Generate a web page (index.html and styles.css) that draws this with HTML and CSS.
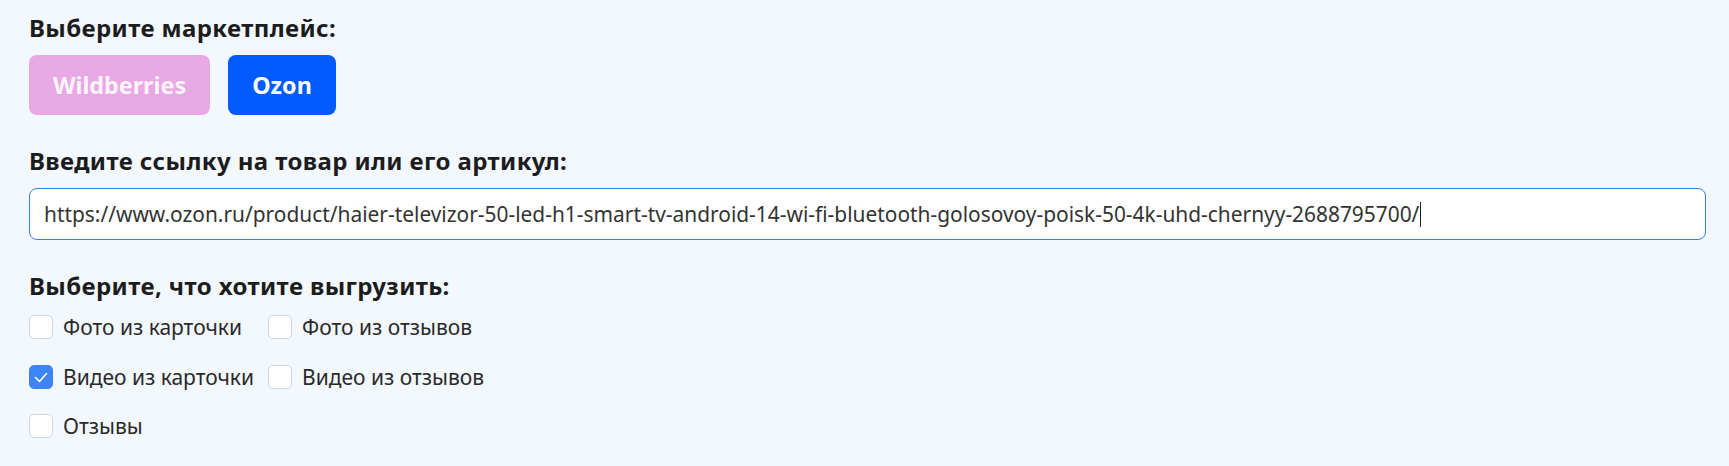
FILE: index.html
```html
<!DOCTYPE html>
<html lang="ru">
<head>
<meta charset="utf-8">
<title>Выгрузка с маркетплейса</title>
<link rel="stylesheet" href="styles.css">
</head>
<body>
<main class="form">
  <section class="field">
    <h2 class="field-title">Выберите маркетплейс:</h2>
    <div class="mp-buttons">
      <button class="mp-btn mp-wb" type="button">Wildberries</button>
      <button class="mp-btn mp-ozon" type="button">Ozon</button>
    </div>
  </section>

  <section class="field">
    <h2 class="field-title">Введите ссылку на товар или его артикул:</h2>
    <div class="url-input" role="textbox">https://www.ozon.ru/product/haier-televizor-50-led-h1-smart-tv-android-14-wi-fi-bluetooth-golosovoy-poisk-50-4k-uhd-chernyy-2688795700/<span class="caret"></span></div>
  </section>

  <section class="field">
    <h2 class="field-title">Выберите, что хотите выгрузить:</h2>
    <div class="options">
      <label class="option"><span class="box"></span><span class="option-text">Фото из карточки</span></label>
      <label class="option"><span class="box"></span><span class="option-text">Фото из отзывов</span></label>
      <label class="option"><span class="box checked"><svg viewBox="0 0 24 24" width="24" height="24"><path d="M6.5 12.5 L10.5 16.5 L17.5 8.5" fill="none" stroke="#fff" stroke-width="1.6" stroke-linecap="round" stroke-linejoin="round"/></svg></span><span class="option-text">Видео из карточки</span></label>
      <label class="option"><span class="box"></span><span class="option-text">Видео из отзывов</span></label>
      <label class="option"><span class="box"></span><span class="option-text">Отзывы</span></label>
    </div>
  </section>
</main>
</body>
</html>
```

FILE: styles.css
```css
html, body {
  margin: 0;
  padding: 0;
}
body {
  background: #f3f7fe;
  font-family: "Noto Sans", "Open Sans", sans-serif;
  color: #1f1f1f;
}
.form {
  padding: 12px 23px 20px 29px;
  display: flex;
  flex-direction: column;
  gap: 30px;
}
.field {
  display: flex;
  flex-direction: column;
  gap: 11px;
}
.field-title {
  margin: 0;
  font-size: 24px;
  font-weight: 700;
  line-height: 32px;
  letter-spacing: 0.4px;
  color: #1c1c1c;
}
.mp-buttons {
  display: flex;
  gap: 18px;
}
.mp-btn {
  height: 60px;
  padding: 0;
  border: none;
  border-radius: 8px;
  font-family: inherit;
  font-size: 23.3px;
  font-weight: 700;
  color: #fff;
}
.mp-wb {
  width: 181px;
  background: #e8a8e3;
  color: #fcf4fb;
}
.mp-ozon {
  width: 108px;
  background: #005bff;
}
.url-input {
  height: 52px;
  box-sizing: border-box;
  border: 1px solid #3d7fe0;
  border-radius: 8px;
  background: #fff;
  padding: 0 14px;
  display: flex;
  align-items: center;
  font-size: 20.9px;
  color: #333;
  white-space: nowrap;
  overflow: hidden;
}
.caret {
  display: inline-block;
  width: 1px;
  height: 25px;
  background: #222;
  margin-left: 1px;
}
.options {
  display: grid;
  grid-template-columns: max-content max-content;
  column-gap: 14px;
  row-gap: 21.5px;
  justify-content: start;
}
.option {
  display: flex;
  align-items: center;
  gap: 10px;
  height: 28px;
  font-size: 21px;
  line-height: 28px;
  color: #2a2a2a;
}
.box {
  width: 24px;
  height: 24px;
  box-sizing: border-box;
  border: 1px solid #cfd6e2;
  border-radius: 5px;
  background: #fff;
  display: flex;
}
.box.checked {
  background: #3d84f5;
  border-color: #3d84f5;
}
.box svg {
  margin: -1px;
}
```
